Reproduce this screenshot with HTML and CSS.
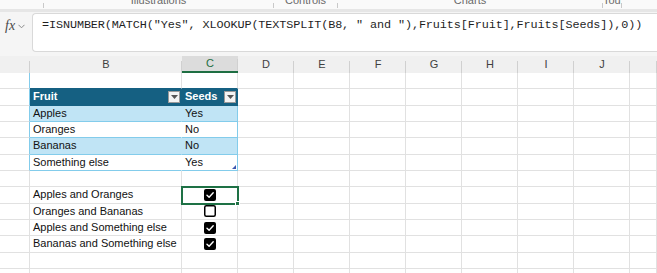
FILE: index.html
```html
<!DOCTYPE html>
<html>
<head>
<meta charset="utf-8">
<link rel="stylesheet" href="styles.css">
</head>
<body>
<div class="ribbon">
  <div class="grp" style="width:43px"></div><div class="sep"></div>
  <div class="grp" style="width:229px">Illustrations</div><div class="sep"></div>
  <div class="grp" style="width:63px">Controls</div><div class="sep"></div>
  <div class="grp" style="width:264px">Charts</div><div class="sep"></div>
  <div class="grp" style="width:18px">Tours</div><div class="sep"></div>
</div>
<div class="ribbon-edge"></div>
<div class="fbar">
  <div class="fx"><span class="fx-t">fx</span><svg class="chev" width="7" height="5" viewBox="0 0 7 5"><path d="M0.5 0.8 L3.5 3.8 L6.5 0.8" fill="none" stroke="#8a8a8a" stroke-width="1"/></svg></div>
  <div class="fbox">=ISNUMBER(MATCH("Yes", XLOOKUP(TEXTSPLIT(B8, " and "),Fruits[Fruit],Fruits[Seeds]),0))</div>
</div>
<div class="sheet">
  <div class="row hdr">
    <div class="h"></div><div class="h">B</div><div class="h sel">C</div><div class="h">D</div><div class="h">E</div><div class="h">F</div><div class="h">G</div><div class="h">H</div><div class="h">I</div><div class="h">J</div><div class="h"></div>
  </div>
  <div class="row">
    <div class="c tl"></div><div class="c tt"></div><div class="c tt"></div><div class="c"></div><div class="c"></div><div class="c"></div><div class="c"></div><div class="c"></div><div class="c"></div><div class="c"></div><div class="c"></div>
  </div>
  <div class="row">
    <div class="c tl"></div>
    <div class="c th thb"><span>Fruit</span><span class="flt"><svg width="7" height="4" viewBox="0 0 7 4"><path d="M0 0 H7 L3.5 4 Z" fill="#555"/></svg></span></div>
    <div class="c th thc"><span>Seeds</span><span class="flt"><svg width="7" height="4" viewBox="0 0 7 4"><path d="M0 0 H7 L3.5 4 Z" fill="#555"/></svg></span></div>
    <div class="c"></div><div class="c"></div><div class="c"></div><div class="c"></div><div class="c"></div><div class="c"></div><div class="c"></div><div class="c"></div>
  </div>
  <div class="row">
    <div class="c tl"></div><div class="c tb band">Apples</div><div class="c tb tr band">Yes</div>
    <div class="c"></div><div class="c"></div><div class="c"></div><div class="c"></div><div class="c"></div><div class="c"></div><div class="c"></div><div class="c"></div>
  </div>
  <div class="row">
    <div class="c tl"></div><div class="c tb">Oranges</div><div class="c tb tr">No</div>
    <div class="c"></div><div class="c"></div><div class="c"></div><div class="c"></div><div class="c"></div><div class="c"></div><div class="c"></div><div class="c"></div>
  </div>
  <div class="row">
    <div class="c tl"></div><div class="c tb band">Bananas</div><div class="c tb tr band">No</div>
    <div class="c"></div><div class="c"></div><div class="c"></div><div class="c"></div><div class="c"></div><div class="c"></div><div class="c"></div><div class="c"></div>
  </div>
  <div class="row">
    <div class="c tl"></div><div class="c tb">Something else</div><div class="c tb tr last">Yes</div>
    <div class="c"></div><div class="c"></div><div class="c"></div><div class="c"></div><div class="c"></div><div class="c"></div><div class="c"></div><div class="c"></div>
  </div>
  <div class="row">
    <div class="c"></div><div class="c"></div><div class="c"></div><div class="c"></div><div class="c"></div><div class="c"></div><div class="c"></div><div class="c"></div><div class="c"></div><div class="c"></div><div class="c"></div>
  </div>
  <div class="row">
    <div class="c"></div><div class="c">Apples and Oranges</div>
    <div class="c cb active"><svg width="12" height="12" viewBox="0 0 12 12"><rect x="0" y="0" width="12" height="12" rx="2" fill="#000"/><path d="M3 6.2 L5.1 8.2 L9.2 3.8" fill="none" stroke="#fff" stroke-width="1.4" stroke-linecap="round" stroke-linejoin="round"/></svg></div>
    <div class="c"></div><div class="c"></div><div class="c"></div><div class="c"></div><div class="c"></div><div class="c"></div><div class="c"></div><div class="c"></div>
  </div>
  <div class="row">
    <div class="c"></div><div class="c">Oranges and Bananas</div>
    <div class="c cb"><svg width="12" height="12" viewBox="0 0 12 12"><rect x="0.75" y="0.75" width="10.5" height="10.5" rx="1.5" fill="#fff" stroke="#000" stroke-width="1.5"/></svg></div>
    <div class="c"></div><div class="c"></div><div class="c"></div><div class="c"></div><div class="c"></div><div class="c"></div><div class="c"></div><div class="c"></div>
  </div>
  <div class="row">
    <div class="c"></div><div class="c">Apples and Something else</div>
    <div class="c cb"><svg width="12" height="12" viewBox="0 0 12 12"><rect x="0" y="0" width="12" height="12" rx="2" fill="#000"/><path d="M3 6.2 L5.1 8.2 L9.2 3.8" fill="none" stroke="#fff" stroke-width="1.4" stroke-linecap="round" stroke-linejoin="round"/></svg></div>
    <div class="c"></div><div class="c"></div><div class="c"></div><div class="c"></div><div class="c"></div><div class="c"></div><div class="c"></div><div class="c"></div>
  </div>
  <div class="row">
    <div class="c"></div><div class="c">Bananas and Something else</div>
    <div class="c cb"><svg width="12" height="12" viewBox="0 0 12 12"><rect x="0" y="0" width="12" height="12" rx="2" fill="#000"/><path d="M3 6.2 L5.1 8.2 L9.2 3.8" fill="none" stroke="#fff" stroke-width="1.4" stroke-linecap="round" stroke-linejoin="round"/></svg></div>
    <div class="c"></div><div class="c"></div><div class="c"></div><div class="c"></div><div class="c"></div><div class="c"></div><div class="c"></div><div class="c"></div>
  </div>
  <div class="row">
    <div class="c"></div><div class="c"></div><div class="c"></div><div class="c"></div><div class="c"></div><div class="c"></div><div class="c"></div><div class="c"></div><div class="c"></div><div class="c"></div><div class="c"></div>
  </div>
  <div class="row">
    <div class="c"></div><div class="c"></div><div class="c"></div><div class="c"></div><div class="c"></div><div class="c"></div><div class="c"></div><div class="c"></div><div class="c"></div><div class="c"></div><div class="c"></div>
  </div>
</div>
</body>
</html>
```
FILE: styles.css
```css
html, body {
  margin: 0;
  padding: 0;
}
body {
  width: 657px;
  height: 273px;
  overflow: hidden;
  background: #fff;
  font-family: "Liberation Sans", Arial, sans-serif;
}
.ribbon {
  height: 9px;
  overflow: hidden;
  display: flex;
  align-items: flex-start;
  background: #fafafa;
}
.grp {
  flex: none;
  font-size: 11px;
  line-height: 11px;
  margin-top: -5px;
  color: #6a6a6a;
  text-align: center;
  white-space: nowrap;
  overflow: hidden;
}
.sep {
  flex: none;
  width: 1px;
  height: 5px;
  margin-top: 3px;
  background: #c9c9c9;
}
.ribbon-edge {
  height: 3px;
  background: #e6e6e6;
}
.fbar {
  display: flex;
  height: 44px;
  background: #f5f5f5;
  padding-top: 1px;
  box-sizing: border-box;
}
.fx {
  width: 32px;
  flex: none;
  display: flex;
  align-items: flex-start;
  padding-top: 6px;
  padding-left: 5px;
  box-sizing: border-box;
  gap: 3px;
}
.fx-t {
  font-family: "Liberation Serif", "Times New Roman", serif;
  font-style: italic;
  font-size: 14px;
  line-height: 14px;
  color: #4a4a4a;
}
.chev {
  margin-top: 5px;
}
.fbox {
  flex: 1;
  height: 39px;
  box-sizing: border-box;
  background: #fff;
  border: 1px solid #d9d9d9;
  border-right: none;
  border-radius: 4px 0 0 4px;
  padding: 4px 0 0 9px;
  font-family: "Liberation Mono", "Courier New", monospace;
  font-size: 11.8px;
  letter-spacing: -0.1px;
  line-height: 15px;
  color: #1f1f1f;
  white-space: nowrap;
  overflow: hidden;
}
.sheet {
  display: flex;
  flex-direction: column;
}
.row {
  display: grid;
  grid-template-columns: 30px 152px 56px repeat(7, 56px) 1fr;
  height: 16.33px;
  flex: none;
}
.row.hdr {
  height: 17px;
  background: #f0f0f0;
}
.h {
  font-size: 11px;
  line-height: 16px;
  text-align: center;
  color: #3f3f3f;
  background: linear-gradient(#d0d0d0, #d0d0d0) right bottom / 1px 12px no-repeat;
  box-sizing: border-box;
}
.h.sel {
  background: #dcdcdc linear-gradient(#d0d0d0, #d0d0d0) right bottom / 1px 12px no-repeat;
  color: #1e6e42;
  border-bottom: 2px solid #1e6e42;
  line-height: 15px;
}
.c {
  box-sizing: border-box;
  border-right: 1px solid #e1e1e1;
  border-bottom: 1px solid #e1e1e1;
  font-size: 11px;
  line-height: 15px;
  padding-left: 3px;
  color: #111;
  white-space: nowrap;
  position: relative;
}
.c.tl {
  border-right-color: #83cceb;
}
.c.tt {
  border-bottom-color: #156082;
}
.c.th {
  background: #156082;
  color: #fff;
  font-weight: bold;
  display: flex;
  align-items: center;
  justify-content: space-between;
  padding-right: 1px;
  border-bottom-color: #156082;
}
.c.thb {
  border-right-color: #156082;
}
.c.thc {
  border-right-color: #156082;
}
.flt {
  width: 12px;
  height: 12px;
  box-sizing: border-box;
  background: #f4f4f4;
  border: 1px solid #9a9a9a;
  display: flex;
  align-items: center;
  justify-content: center;
}
.c.tb {
  background: #fff;
  border-bottom-color: #83cceb;
  border-right-color: #fff;
}
.c.tb.band {
  background: #c0e4f5;
  border-right-color: #c0e4f5;
}
.c.tb.tr {
  border-right-color: #83cceb;
}
.c.last::after {
  content: "";
  position: absolute;
  right: 1px;
  bottom: 1px;
  width: 0;
  height: 0;
  border-left: 4px solid transparent;
  border-bottom: 4px solid #3b57b0;
}
.c.cb {
  display: flex;
  align-items: center;
  justify-content: center;
  padding-left: 0;
}
.c.active {
  outline: 2px solid #1e7145;
  outline-offset: -1px;
  z-index: 1;
}
.c.active::after {
  content: "";
  position: absolute;
  right: -3px;
  bottom: -3px;
  width: 5px;
  height: 5px;
  background: #1e7145;
  border: 1px solid #fff;
  box-sizing: border-box;
}
```
